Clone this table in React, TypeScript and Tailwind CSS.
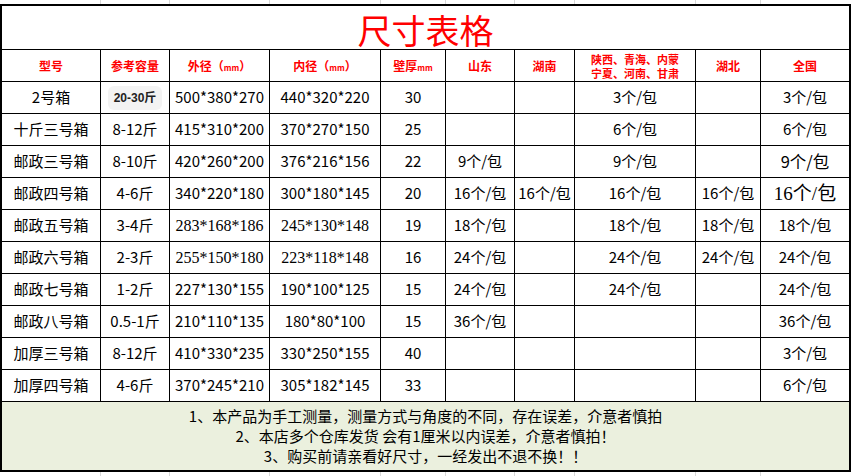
import React from 'react';

const cols = 'grid grid-cols-[99px_69px_100px_111px_65px_69px_60px_121px_65px_88px]';
const cjk = { fontFamily: '"Noto Sans CJK SC", "Liberation Sans", sans-serif' };

const headers = ['型号', '参考容量', '外径', '内径', '壁厚', '山东', '湖南', '', '湖北', '全国'];

const rows: string[][] = [
  ['2号箱', '20-30斤', '500*380*270', '440*320*220', '30', '', '', '3个/包', '', '3个/包'],
  ['十斤三号箱', '8-12斤', '415*310*200', '370*270*150', '25', '', '', '6个/包', '', '6个/包'],
  ['邮政三号箱', '8-10斤', '420*260*200', '376*216*156', '22', '9个/包', '', '9个/包', '', '9个/包'],
  ['邮政四号箱', '4-6斤', '340*220*180', '300*180*145', '20', '16个/包', '16个/包', '16个/包', '16个/包', '16个/包'],
  ['邮政五号箱', '3-4斤', '283*168*186', '245*130*148', '19', '18个/包', '', '18个/包', '18个/包', '18个/包'],
  ['邮政六号箱', '2-3斤', '255*150*180', '223*118*148', '16', '24个/包', '', '24个/包', '24个/包', '24个/包'],
  ['邮政七号箱', '1-2斤', '227*130*155', '190*100*125', '15', '24个/包', '', '24个/包', '', '24个/包'],
  ['邮政八号箱', '0.5-1斤', '210*110*135', '180*80*100', '15', '36个/包', '', '', '', '36个/包'],
  ['加厚三号箱', '8-12斤', '410*330*235', '330*250*155', '40', '', '', '', '', '3个/包'],
  ['加厚四号箱', '4-6斤', '370*245*210', '305*182*145', '33', '', '', '', '', '6个/包'],
];

// cells drawn in a different font in the sheet
const serif = (r: number, c: number) => ((r === 4 || r === 5) && (c === 2 || c === 3)) || (r === 3 && c === 9);

function Cell({ r, c, v }: { r: number; c: number; v: string }) {
  const last = c === 9;
  const base = `flex items-center justify-center border-b border-black ${last ? '' : 'border-r'} text-black whitespace-nowrap`;
  if (r === 0 && c === 1) {
    return (
      <div className={base}>
        <span className="rounded-md bg-[#f3f3f3] px-[6px] py-[3px] text-[12px] font-semibold text-[#222]" style={{ fontFamily: '"Liberation Sans", "Noto Sans CJK SC", sans-serif' }}>
          {v}
        </span>
      </div>
    );
  }
  if (serif(r, c)) {
    return (
      <div className={`${base} ${c === 9 ? 'text-[19px] pt-[2px]' : 'text-[16px] pt-[1px]'}`} style={{ fontFamily: '"Liberation Serif", "Noto Sans CJK SC", serif' }}>
        {v}
      </div>
    );
  }
  return (
    <div className={`${base} ${r === 2 && c === 9 ? 'text-[16.5px]' : 'text-[15px]'}`} style={cjk}>
      {v}
    </div>
  );
}

function Strip() {
  return (
    <div className={`${cols} h-[4px] w-[851px] px-[2px]`}>
      {headers.map((_, i) => (
        <div key={i} className={i === 9 ? '' : 'border-r border-[#d8d8d8]'} />
      ))}
    </div>
  );
}

export default function App() {
  return (
    <div className="h-[476px] w-[852px] overflow-hidden bg-white" style={cjk}>
      <Strip />
      <div className="w-[851px] border-2 border-black">
        <div className="flex h-[44px] items-center justify-center border-b border-black pt-[4px] text-[34px] leading-none text-[#ff0000]">
          尺寸表格
        </div>

        <div className={`${cols} h-[32px]`}>
          {headers.map((h, i) => (
            <div
              key={i}
              className={`flex items-center justify-center border-b border-black ${i === 9 ? '' : 'border-r'} text-[12px] font-bold text-[#ff0000] text-center`}
            >
              {i === 7 ? (
                <div className="flex flex-col text-[11px] leading-[14px]">
                  <span>陕西、青海、内蒙</span>
                  <span>宁夏、河南、甘肃</span>
                </div>
              ) : i === 2 || i === 3 ? (
                <span>
                  {h}（<span className="text-[8px]">mm</span>）
                </span>
              ) : i === 4 ? (
                <span>
                  {h}
                  <span className="text-[8px]">mm</span>
                </span>
              ) : (
                h
              )}
            </div>
          ))}
        </div>

        {rows.map((row, r) => (
          <div key={r} className={`${cols} h-[32px]`}>
            {row.map((v, c) => (
              <Cell key={c} r={r} c={c} v={v} />
            ))}
          </div>
        ))}

        <div className="flex h-[68px] flex-col items-center justify-center bg-[#ebf0de] text-[15px] leading-[20px] text-black">
          <p>1、本产品为手工测量，测量方式与角度的不同，存在误差，介意者慎拍</p>
          <p>2、本店多个仓库发货 会有1厘米以内误差，介意者慎拍！</p>
          <p>3、购买前请亲看好尺寸，一经发出不退不换！！</p>
        </div>
      </div>
      <Strip />
    </div>
  );
}
